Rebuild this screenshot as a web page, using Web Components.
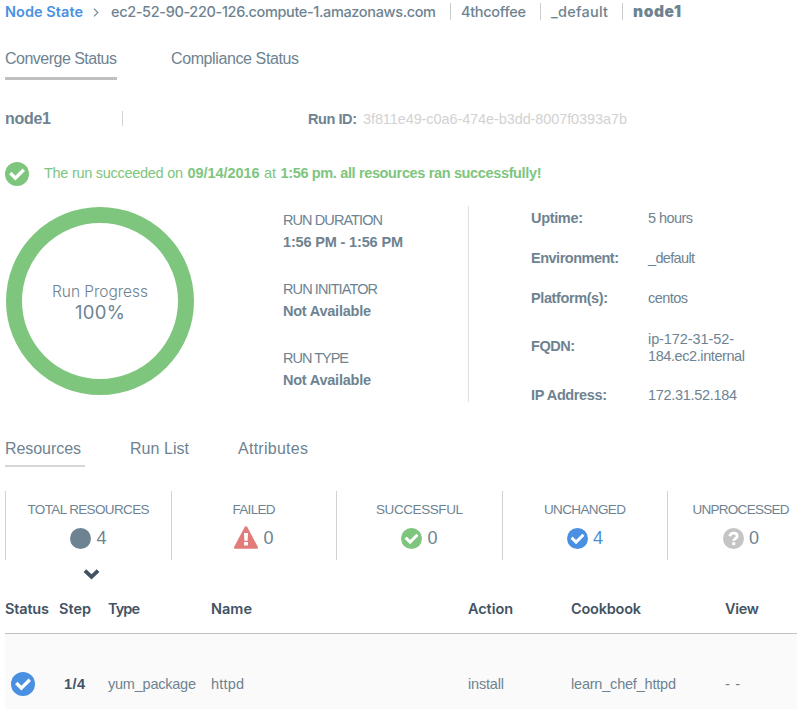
<!DOCTYPE html>
<html lang="en">
<head>
<meta charset="utf-8">
<title>Node State</title>
<style>
html,body{margin:0;background:#fff;overflow:hidden}
body{width:797px;height:709px}
</style>
</head>
<body>
<node-page></node-page>
<script>
const define = (name, html, after) => {
  const t = document.createElement('template');
  t.innerHTML = html;
  customElements.define(name, class extends HTMLElement {
    connectedCallback() {
      if (!this.shadowRoot) {
        this.attachShadow({ mode: 'open' }).append(t.content.cloneNode(true));
      }
      if (after) after(this, this.shadowRoot);
    }
  });
};

/* One line of text, tracked out or in to fill the width it is given. */
define('fit-text', `<style>
:host{display:block;white-space:nowrap;flex:none}
:host([display]){font-family:Inter,"Open Sans",sans-serif}
span{display:inline-block}
</style><span><slot></slot></span>`, (el, root) => {
  const w = parseFloat(el.getAttribute('w'));
  const s = root.querySelector('span');
  const n = el.textContent.length;
  el.style.width = w + 'px';
  if (n > 1) s.style.letterSpacing = (w - s.getBoundingClientRect().width) / (n - 1) + 'px';
});

const check = c => `<circle cx="12" cy="12" r="12" fill="${c}"/><path d="M5.900 12.300l4.300 4.300 8-8" fill="none" stroke="#fff" stroke-width="3.800" stroke-linecap="square" stroke-linejoin="miter" transform="translate(1.200 1.200) scale(.9)"/>`;
const icons = {
  success: ['0 0 24 24', check('#7ec57e')],
  same: ['0 0 24 24', check('#4a90e2')],
  total: ['0 0 24 24', '<circle cx="12" cy="12" r="12" fill="#6e8391"/>'],
  unknown: ['0 0 24 24', '<circle cx="12" cy="12" r="12" fill="#c4c4c4"/><path d="M7.600 9.400c.8-2.300 2.300-3.500 4.400-3.500 2.500 0 4.200 1.400 4.200 3.300 0 3-4 2.900-4 5.500" fill="none" stroke="#fff" stroke-width="3.300"/><path d="M10.500 16.200h3.500v3.400h-3.500z" fill="#fff"/>'],
  failed: ['0 0 24 23', '<path d="M12 .2c.6 0 1 .3 1.300.8l10.500 19.800c.5 1 0 2-1.200 2H1.400c-1.200 0-1.700-1-1.200-2L10.700 1c.3-.5.700-.8 1.300-.8z" fill="#e27c7a"/><path d="M10 7h4l-.4 7.700h-3.200zM10.100 16h3.800v3.500h-3.800z" fill="#fff"/>'],
  down: ['0 0 17 12', '<path d="M1.900 2.700l6.600 6.200 6.600-6.200" fill="none" stroke="#435363" stroke-width="3.900"/>'],
  next: ['0 0 6 9', '<path d="M.9.7l4 3.800-4 3.800" fill="none" stroke="#6e8391" stroke-width="1.100"/>']
};
define('ui-icon', `<style>:host{display:block;flex:none}svg{display:block;width:100%;height:100%}</style><svg></svg>`, (el, root) => {
  const [box, body] = icons[el.getAttribute('name')];
  const svg = root.querySelector('svg');
  svg.setAttribute('viewBox', box);
  svg.innerHTML = body;
  el.style.width = el.getAttribute('w') + 'px';
  el.style.height = el.getAttribute('h') + 'px';
});

define('bread-crumbs', `<style>
:host{display:flex;height:24px;align-items:center;padding-left:5px;box-sizing:border-box;font-size:14.500px;font-weight:500;line-height:20px}
a{color:#4a90e2;font-weight:600}
i{width:1px;height:17px;background:#ccc;margin:0 10px 2px 14px}
ui-icon{margin:0 12px 0 10px}
.b{font-weight:900;font-size:15.500px}
</style>
<a><fit-text display w="78">Node State</fit-text></a><ui-icon name="next" w="6" h="9"></ui-icon>
<fit-text display w="325">ec2-52-90-220-126.compute-1.amazonaws.com</fit-text><i></i>
<fit-text display w="65">4thcoffee</fit-text><i></i>
<fit-text display w="57">_default</fit-text><i></i>
<fit-text class="b" display w="48">node1</fit-text>`);

define('tab-item', `<style>
:host{display:block;box-sizing:border-box;font-size:16px;line-height:20px;border-bottom:0 solid transparent}
:host([active]){border-bottom:var(--bar)}
</style><slot></slot>`);

define('run-head', `<style>
:host{display:flex;height:22px;align-items:center;padding-left:5px;line-height:20px;font-size:14.500px}
b{display:block}.n{width:117px;font-size:16px}.n fit-text{padding-bottom:1px}
i{width:1px;height:15px;background:#d4d4d4;margin:0 185px 2px 0}
.id{color:#d2d2d2;margin-left:6px}
</style><b class="n"><fit-text w="46">node1</fit-text></b><i></i><b><fit-text w="49">Run ID:</fit-text></b><fit-text class="id" w="264">3f811e49-c0a6-474e-b3dd-8007f0393a7b</fit-text>`);

define('run-message', `<style>
:host{display:flex;height:24px;align-items:center;padding-left:5px;color:#7ec57e;font-size:14.500px;line-height:22px}
ui-icon{margin-right:15px}div{display:flex;gap:4.500px;padding-bottom:2px}b{display:block}
</style><ui-icon name="success" w="24" h="24"></ui-icon><div><fit-text w="139">The run succeeded on</fit-text><b><fit-text w="72">09/14/2016</fit-text></b><fit-text w="12">at</fit-text><b><fit-text w="261">1:56 pm. all resources ran successfully!</fit-text></b></div>`);

define('progress-ring', `<style>
:host{display:flex;flex-direction:column;align-items:center;justify-content:center;box-sizing:border-box;width:188px;height:188px;border:16px solid #7ec57e;border-radius:50%;line-height:20px;font-size:15.500px;font-weight:300;padding-top:1px;flex:none}
.p{font-size:18.500px;font-weight:400}
</style><fit-text display w="96">Run Progress</fit-text><fit-text class="p" display w="50">100%</fit-text>`);

define('run-fact', `<style>:host{display:block;font-size:14.500px;line-height:22px;height:69px}b{display:block}</style><slot name="label"></slot><b><slot name="value"></slot></b>`);
define('node-fact', `<style>:host{display:flex;align-items:center;font-size:14.500px;line-height:17px}b{display:block;width:117px}:host([tall]) div{padding-top:2px;margin-bottom:-1px}:host([tall]) b{margin-bottom:1px}</style><b><slot name="label"></slot></b><div><slot></slot></div>`);

define('stat-cell', `<style>
:host{display:flex;flex-direction:column;align-items:center;box-sizing:border-box;height:69px;border-left:1px solid #d2d2d2;padding-top:9px;font-size:13.500px;line-height:20px}
div{display:flex;align-items:center;gap:5px;height:23px;margin-top:6px;font-size:18px}
::slotted(ui-icon){margin-top:var(--drop,1px)}
:host([blue]) .c{color:#4a90e2}
</style><slot></slot><div><slot name="icon"></slot><span class="c"><slot name="count"></slot></span></div>`);

define('resource-table', `<style>
:host{display:block;margin-left:5px}
.r{display:grid;grid-template-columns:54px 49px 103px 257px 103px 154px 1fr;align-items:center}
.h{height:47px;padding-bottom:3px;box-sizing:border-box;border-bottom:1px solid #bcc2c2;color:#435363;font-size:14.500px;font-weight:600;line-height:20px}
.d{height:75px;padding-top:13px;box-sizing:content-box;height:74px;background:#fafafa;font-size:14.500px;line-height:20px}
.d b{display:block;color:#435363;padding-left:5px}
ui-icon{margin-left:6px}
</style>
<div class="r h"><fit-text display w="44">Status</fit-text><fit-text display w="32">Step</fit-text><fit-text display w="32">Type</fit-text><fit-text display w="41">Name</fit-text><fit-text display w="45">Action</fit-text><fit-text display w="70">Cookbook</fit-text><fit-text display w="34">View</fit-text></div>
<div class="r d"><ui-icon name="same" w="24" h="24"></ui-icon><b><fit-text w="21">1/4</fit-text></b><fit-text w="88">yum_package</fit-text><fit-text w="33">httpd</fit-text><fit-text w="36">install</fit-text><fit-text w="105">learn_chef_httpd</fit-text><fit-text w="15">- -</fit-text></div>`);

define('node-page', `<style>
:host{display:block;width:797px;height:709px;overflow:hidden;color:#6e8391;font-family:"Liberation Sans",Arial,sans-serif}
.tabs{display:flex;padding-left:5px}
.top{--bar:3px solid #c0c0c0;gap:54px;margin-top:25px;height:31px}
.top tab-item{height:31px}
.sub{--bar:2px solid #d6d6d6;height:28px;margin-top:37px}
.sub tab-item{height:28px}
.sub tab-item:nth-child(1){width:80px;margin-right:45px}
.sub tab-item:nth-child(2){margin-right:49px}
run-head{margin-top:28px}run-message{margin-top:32px}
.summary{display:flex;height:196px;margin-top:20px;padding-left:6px;align-items:flex-start}
progress-ring{margin-top:1px;margin-right:89px}
.facts{width:185px;padding-top:3px}
.node{border-left:1px solid #e0e0e0;height:196px;padding-left:62px;box-sizing:border-box;padding-top:4px}
.node node-fact{margin-bottom:23px}
.node node-fact:nth-child(3){margin-bottom:22px}
.node node-fact:nth-child(4){margin-bottom:23px}
.stats{display:grid;grid-template-columns:166px 165px 166px 165px 147px;margin:24px 0 0 5px}
.arrow{padding-left:83px;height:12px;margin-top:8px}
resource-table{margin-top:7px}
</style>
<bread-crumbs></bread-crumbs>
<nav class="tabs top"><tab-item active><fit-text w="112">Converge Status</fit-text></tab-item><tab-item><fit-text w="128">Compliance Status</fit-text></tab-item></nav>
<run-head></run-head>
<run-message></run-message>
<section class="summary"><progress-ring></progress-ring>
<div class="facts">
<run-fact><fit-text slot="label" w="100">RUN DURATION</fit-text><fit-text slot="value" w="120">1:56 PM - 1:56 PM</fit-text></run-fact>
<run-fact><fit-text slot="label" w="95">RUN INITIATOR</fit-text><fit-text slot="value" w="88">Not Available</fit-text></run-fact>
<run-fact><fit-text slot="label" w="66">RUN TYPE</fit-text><fit-text slot="value" w="88">Not Available</fit-text></run-fact>
</div>
<div class="node">
<node-fact><fit-text slot="label" w="52">Uptime:</fit-text><fit-text w="45">5 hours</fit-text></node-fact>
<node-fact><fit-text slot="label" w="88">Environment:</fit-text><fit-text w="47">_default</fit-text></node-fact>
<node-fact><fit-text slot="label" w="77">Platform(s):</fit-text><fit-text w="40">centos</fit-text></node-fact>
<node-fact tall><fit-text slot="label" w="44">FQDN:</fit-text><fit-text w="86">ip-172-31-52-</fit-text><fit-text w="97">184.ec2.internal</fit-text></node-fact>
<node-fact><fit-text slot="label" w="76">IP Address:</fit-text><fit-text w="89">172.31.52.184</fit-text></node-fact>
</div></section>
<nav class="tabs sub"><tab-item active><fit-text w="76">Resources</fit-text></tab-item><tab-item><fit-text w="59">Run List</fit-text></tab-item><tab-item><fit-text w="70">Attributes</fit-text></tab-item></nav>
<section class="stats">
<stat-cell><fit-text w="122">TOTAL RESOURCES</fit-text><ui-icon slot="icon" name="total" w="21" h="21"></ui-icon><span slot="count">4</span></stat-cell>
<stat-cell style="--drop:0"><fit-text w="43">FAILED</fit-text><ui-icon slot="icon" name="failed" w="24" h="23"></ui-icon><span slot="count">0</span></stat-cell>
<stat-cell><fit-text w="87">SUCCESSFUL</fit-text><ui-icon slot="icon" name="success" w="21" h="21"></ui-icon><span slot="count">0</span></stat-cell>
<stat-cell blue><fit-text w="82">UNCHANGED</fit-text><ui-icon slot="icon" name="same" w="21" h="21"></ui-icon><span slot="count">4</span></stat-cell>
<stat-cell><fit-text w="97">UNPROCESSED</fit-text><ui-icon slot="icon" name="unknown" w="21" h="21"></ui-icon><span slot="count">0</span></stat-cell>
</section>
<div class="arrow"><ui-icon name="down" w="17" h="12"></ui-icon></div>
<resource-table></resource-table>`);
</script>
</body>
</html>
